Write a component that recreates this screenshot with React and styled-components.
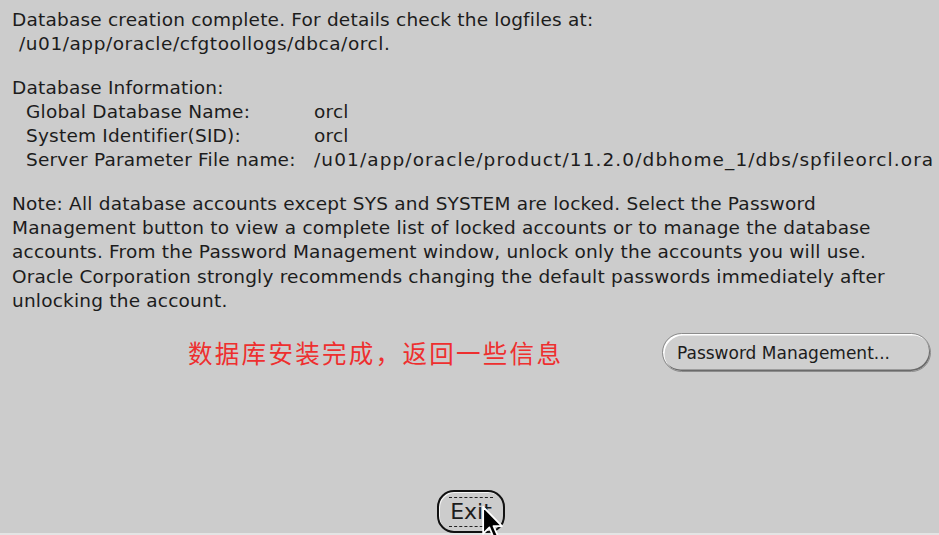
import React from "react";
import styled, { createGlobalStyle } from "styled-components";

const Global = createGlobalStyle`
  html, body { margin: 0; padding: 0; background: #cccccc; }
  #root { width: 939px; height: 535px; }
`;

const Page = styled.div`
  position: relative;
  width: 939px;
  height: 535px;
  overflow: hidden;
  background: #cccccc;
  display: flex;
  flex-direction: column;
  font-family: "DejaVu Sans", "Liberation Sans", sans-serif;
  font-size: 18.5px;
  letter-spacing: 0.2px;
  color: #1c1c1c;
  box-sizing: border-box;
  padding-top: 8px;
`;

const Block = styled.div`
  padding-left: 12px;
  margin-top: ${(p) => p.$gap || 0}px;
  line-height: 24.3px;
  white-space: pre;
`;

const PathLine = styled.div`
  padding-left: 19px;
  line-height: 24.3px;
  white-space: pre;
  letter-spacing: ${(p) => p.$spacing}px;
`;

const Path = styled.span`
  letter-spacing: ${(p) => p.$spacing}px;
`;

const InfoGrid = styled.div`
  display: grid;
  grid-template-columns: 288px auto;
  padding-left: 26px;
  line-height: 24.3px;
  white-space: pre;
`;

const ActionRow = styled.div`
  display: flex;
  align-items: center;
  margin-top: 20px;
  padding-left: 188px;
  padding-right: 8px;
  height: 39px;
`;

const Notice = styled.div`
  font-family: "Noto Sans CJK SC", "Noto Sans", sans-serif;
  font-size: 24.5px;
  letter-spacing: 2.3px;
  color: #ee2f2f;
  line-height: 1;
`;

const PillButton = styled.button`
  margin-left: auto;
  height: 39px;
  width: 269px;
  border-radius: 20px;
  border: 1px solid #8c8c8c;
  background: #cfcfcf;
  box-shadow: inset 1.5px 1.5px 0 #ffffff, inset -1px -1.5px 0 #6a6a6a;
  font-family: "DejaVu Sans", "Liberation Sans", sans-serif;
  font-size: 17px;
  color: #1c1c1c;
  text-align: left;
  padding: 0 0 0 14px;
  cursor: default;
`;

const BottomRow = styled.div`
  margin-top: auto;
  display: flex;
  justify-content: center;
  padding-left: 3px;
`;

const ExitButton = styled.button`
  width: 68px;
  height: 43px;
  border: 2px solid #111;
  border-radius: 17px;
  background: #cccccc;
  box-shadow: inset 1px 1px 0 #f4f4f4;
  display: flex;
  align-items: center;
  justify-content: center;
  padding: 0;
  font-family: "DejaVu Sans", "Liberation Sans", sans-serif;
  font-size: 22px;
  color: #1c1c1c;
`;

const FocusLabel = styled.span`
  border-top: 1px dashed #222;
  border-bottom: 1px dashed #222;
  padding: 3px 1px;
  line-height: 22px;
`;

const BottomEdge = styled.div`
  height: 2px;
  background: #e4e4e4;
`;

const Cursor = styled.svg`
  position: absolute;
  left: 482px;
  top: 506px;
  width: 22px;
  height: 34px;
`;

export default function App() {
  return (
    <Page>
      <Global />
      <Block>Database creation complete. For details check the logfiles at:</Block>
      <PathLine $spacing={0.55}>/u01/app/oracle/cfgtoollogs/dbca/orcl.</PathLine>
      <Block $gap={19}>Database Information:</Block>
      <InfoGrid>
        <span>Global Database Name:</span>
        <span>orcl</span>
        <span>System Identifier(SID):</span>
        <span>orcl</span>
        <span>Server Parameter File name:</span>
        <Path $spacing={1.1}>/u01/app/oracle/product/11.2.0/dbhome_1/dbs/spfileorcl.ora</Path>
      </InfoGrid>
      <Block $gap={19}>
        {"Note: All database accounts except SYS and SYSTEM are locked. Select the Password\nManagement button to view a complete list of locked accounts or to manage the database\naccounts. From the Password Management window, unlock only the accounts you will use.\nOracle Corporation strongly recommends changing the default passwords immediately after\nunlocking the account."}
      </Block>
      <ActionRow>
        <Notice>数据库安装完成，返回一些信息</Notice>
        <PillButton>Password Management...</PillButton>
      </ActionRow>
      <BottomRow>
        <ExitButton>
          <FocusLabel>Exit</FocusLabel>
        </ExitButton>
      </BottomRow>
      <BottomEdge />
      <Cursor viewBox="0 0 12 19">
        <path d="M0.5 0.5 L0.5 15.5 L4 12 L6.5 18 L8.8 17 L6.3 11.2 L11 11.2 Z" fill="#000" stroke="#fff" strokeWidth="1" strokeLinejoin="round" />
      </Cursor>
    </Page>
  );
}
